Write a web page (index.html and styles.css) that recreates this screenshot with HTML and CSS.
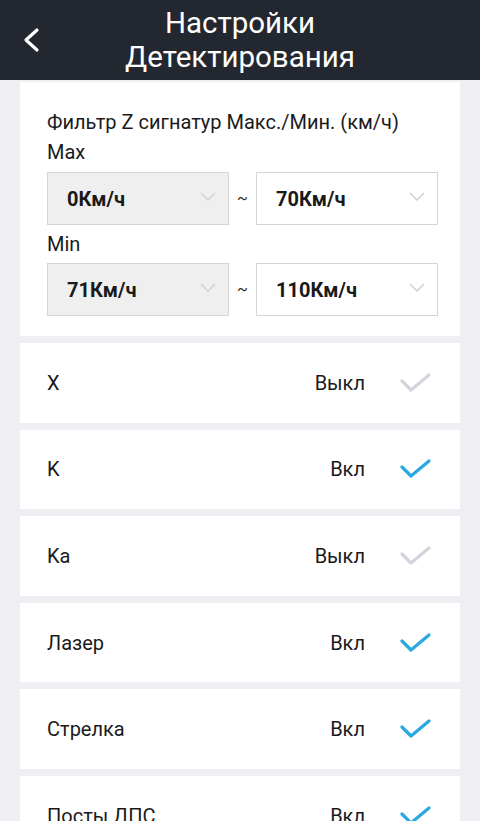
FILE: index.html
```html
<!DOCTYPE html>
<html>
<head>
  <meta charset="UTF-8">
  <meta name="viewport" content="width=device-width, initial-scale=1">
  <title>Настройки Детектирования</title>
  <link rel="stylesheet" href="styles.css">
</head>
<body>

<div class="topbar">
  <a class="back" href="#">
    <svg width="18" height="26" viewBox="0 0 18 26"><path d="M15 3 L4 13 L15 23" fill="none" stroke="#fff" stroke-width="3.2" stroke-linecap="round" stroke-linejoin="round"/></svg>
  </a>
  <h1>Настройки<br>Детектирования</h1>
</div>

<div class="list">

  <div class="card filter">
    <div class="filter-title">Фильтр Z сигнатур Макс./Мин. (км/ч)</div>
    <div class="label max">Max</div>
    <div class="range">
      <div class="select disabled"><span>0Км/ч</span><svg class="arrow" width="16" height="9" viewBox="0 0 16 9"><path d="M1 1 L8 8 L15 1" fill="none" stroke="#d3d3d3" stroke-width="1.6"/></svg></div>
      <span class="tilde">~</span>
      <div class="select"><span>70Км/ч</span><svg class="arrow" width="16" height="9" viewBox="0 0 16 9"><path d="M1 1 L8 8 L15 1" fill="none" stroke="#d3d3d3" stroke-width="1.6"/></svg></div>
    </div>
    <div class="label min">Min</div>
    <div class="range">
      <div class="select disabled"><span>71Км/ч</span><svg class="arrow" width="16" height="9" viewBox="0 0 16 9"><path d="M1 1 L8 8 L15 1" fill="none" stroke="#d3d3d3" stroke-width="1.6"/></svg></div>
      <span class="tilde">~</span>
      <div class="select"><span>110Км/ч</span><svg class="arrow" width="16" height="9" viewBox="0 0 16 9"><path d="M1 1 L8 8 L15 1" fill="none" stroke="#d3d3d3" stroke-width="1.6"/></svg></div>
    </div>
  </div>

  <div class="card row">
    <span class="name">X</span>
    <span class="state">Выкл</span>
    <svg class="check off" width="32" height="22" viewBox="0 0 32 22"><path d="M2 9 L11 18 L29 3" fill="none" stroke-width="3.2" stroke-linecap="round" stroke-linejoin="round"/></svg>
  </div>

  <div class="card row">
    <span class="name">K</span>
    <span class="state">Вкл</span>
    <svg class="check on" width="32" height="22" viewBox="0 0 32 22"><path d="M2 9 L11 18 L29 3" fill="none" stroke-width="3.2" stroke-linecap="round" stroke-linejoin="round"/></svg>
  </div>

  <div class="card row">
    <span class="name">Ka</span>
    <span class="state">Выкл</span>
    <svg class="check off" width="32" height="22" viewBox="0 0 32 22"><path d="M2 9 L11 18 L29 3" fill="none" stroke-width="3.2" stroke-linecap="round" stroke-linejoin="round"/></svg>
  </div>

  <div class="card row">
    <span class="name">Лазер</span>
    <span class="state">Вкл</span>
    <svg class="check on" width="32" height="22" viewBox="0 0 32 22"><path d="M2 9 L11 18 L29 3" fill="none" stroke-width="3.2" stroke-linecap="round" stroke-linejoin="round"/></svg>
  </div>

  <div class="card row">
    <span class="name">Стрелка</span>
    <span class="state">Вкл</span>
    <svg class="check on" width="32" height="22" viewBox="0 0 32 22"><path d="M2 9 L11 18 L29 3" fill="none" stroke-width="3.2" stroke-linecap="round" stroke-linejoin="round"/></svg>
  </div>

  <div class="card row">
    <span class="name">Посты ДПС</span>
    <span class="state">Вкл</span>
    <svg class="check on" width="32" height="22" viewBox="0 0 32 22"><path d="M2 9 L11 18 L29 3" fill="none" stroke-width="3.2" stroke-linecap="round" stroke-linejoin="round"/></svg>
  </div>

</div>

</body>
</html>
```

FILE: styles.css
```css
body{
  margin: 0;
  background: #eeeef3;
  font-family: Roboto, "Noto Sans", sans-serif;
  color: #1a1a1a;
  height: 821px;
  overflow: hidden;
}

.topbar{
  height: 80px;
  background: #23272f;
  display: flex;
  align-items: center;
  justify-content: center;
  position: relative;
}

.back{
  position: absolute;
  left: 22px;
  top: 27px;
  display: block;
  line-height: 0;
}

.topbar h1{
  margin: 0;
  color: #fff;
  font-weight: normal;
  font-size: 29.5px;
  line-height: 34px;
  text-align: center;
}

.list{
  padding: 2px 20px 0;
  display: flex;
  flex-direction: column;
  gap: 7px;
}

.card{
  background: #fff;
}

.filter{
  padding: 28px 20px 20px 27px;
}

.filter-title{
  font-size: 20px;
  line-height: 24px;
}

.label{
  font-size: 20px;
  line-height: 24px;
}

.label.max{
  margin: 6px 0 8px;
}

.label.min{
  margin: 7px 0 7px;
}

.range{
  display: flex;
  align-items: center;
}

.select{
  width: 182px;
  height: 53px;
  box-sizing: border-box;
  border: 1px solid #d5d5d5;
  background: #fff;
  display: flex;
  align-items: center;
  padding: 0 12px 0 19px;
  font-size: 20px;
  font-weight: bold;
}

.select span{
  flex: 1;
}

.select.disabled{
  background: #efefef;
}

.arrow{
  margin-bottom: 4px;
}

.tilde{
  width: 27px;
  text-align: center;
  font-size: 16px;
  color: #333;
}

.row{
  height: 79.6px;
  display: flex;
  align-items: center;
  padding: 0 28px 0 27px;
  font-size: 20px;
}

.row .name{
  flex: 1;
}

.row .state{
  margin-right: 35px;
}

.check.on path{
  stroke: #2aa8e0;
}

.check.off path{
  stroke: #d3d5de;
}
```
